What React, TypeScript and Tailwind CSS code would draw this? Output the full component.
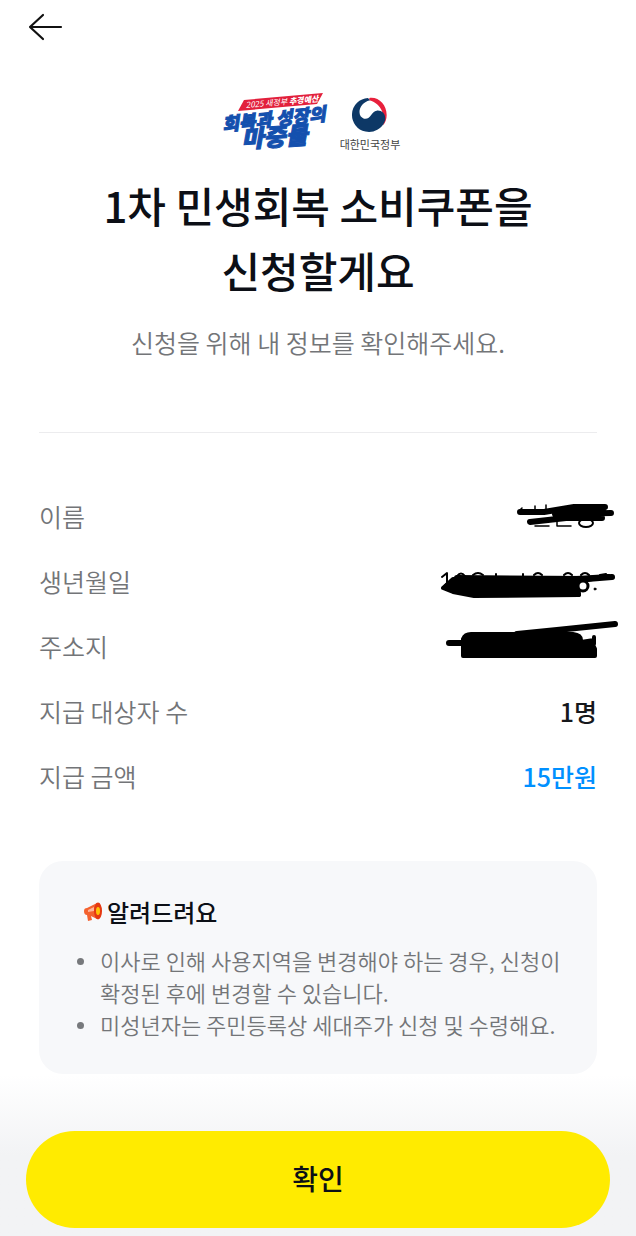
const rows = [
  { label: "이름", value: <NameMark /> },
  { label: "생년월일", value: <BirthMark /> },
  { label: "주소지", value: <AddressMark /> },
  { label: "지급 대상자 수", value: <span className="text-[#16181c]">1명</span> },
  { label: "지급 금액", value: <span className="text-[#0090ff]">15만원</span> },
];

const notices = [
  "이사로 인해 사용지역을 변경해야 하는 경우, 신청이 확정된 후에 변경할 수 있습니다.",
  "미성년자는 주민등록상 세대주가 신청 및 수령해요.",
];

function NameMark() {
  return (
    <svg className="-mr-5 h-9 w-[104px]" viewBox="0 0 104 36" fill="none" stroke="#000" strokeLinecap="round" strokeLinejoin="round">
      <path strokeWidth="6" d="M7 13h24L61 8h31M52 15l46-1M17 23l36-4h36" />
      <path strokeWidth="10" d="M44 15l24-3h20" />
      <path strokeWidth="1.500" d="M6 12l3-3M22 7v5M33 6v6M22 27h14M44 22v5h14" />
      <ellipse cx="73" cy="24" rx="7" ry="4" strokeWidth="2" />
    </svg>
  );
}

function BirthMark() {
  return (
    <svg className="-mr-5 h-9 w-[180px]" viewBox="0 0 180 36" fill="none" stroke="#000" strokeLinecap="round" strokeLinejoin="round">
      <path fill="#000" strokeWidth="4" d="M16 15l20-1h104l32-2-22 4-9 9 1 6-105 1-21-4-10-4z" />
      <path strokeWidth="6" d="M20 14l130 1 25-2M10 22l12 4 20 4h99" />
      <path strokeWidth="2" d="M5 13l5-4v17M20 12q4-5 8 0M36 11q5-4 10 0M59 10v3M86 10v3M97 11q4-4 8 0M127 11q4-4 8 0M144 11q4-4 8 0M163 11l6-1" />
      <ellipse cx="146" cy="22" rx="5" ry="5" strokeWidth="3" fill="#fff" />
      <circle cx="158" cy="25" r="1" fill="#000" strokeWidth="1" />
    </svg>
  );
}

function AddressMark() {
  return (
    <svg className="-mr-6 h-11 w-[176px] overflow-visible" viewBox="0 0 176 44" fill="none" stroke="#000" strokeLinecap="round" strokeLinejoin="round">
      <path fill="#000" strokeWidth="4" d="M18 14q2-5 8-5h102q8 1 8 6v16H18z" />
      <path strokeWidth="6" d="M4 18h14M72 9l40-4 58-6" />
      <path fill="#000" strokeWidth="4" d="M136 17l13-2v-3 7M134 20h14l2 4v7h-16z" />
    </svg>
  );
}

function CampaignLogo() {
  return (
    <svg className="h-16 w-[110px]" viewBox="0 0 110 64" role="img" aria-label="회복과 성장의 마중물">
      <path fill="#e2203c" d="M24 10l79-7-6 11-79 7z" />
      <g fontFamily="'Noto Sans CJK KR', sans-serif" fontStyle="italic" fontWeight="900">
        <text x="26" y="18" fontSize="8" fill="#fff" transform="rotate(-5 26 18)">
          <tspan fontWeight="400">2025 새정부 </tspan>추경예산
        </text>
        <g fill="#1450ae">
          <text x="3" y="41" fontSize="18" stroke="#1450ae" strokeWidth="1" transform="rotate(-6 3 41)">회복과 성장의</text>
          <text x="22" y="58" fontSize="24" stroke="#1450ae" strokeWidth="1" transform="rotate(-4 22 58)">마중물</text>
        </g>
      </g>
    </svg>
  );
}

function GovernmentLogo() {
  return (
    <div className="flex flex-col items-center pt-1">
      <svg className="size-10" viewBox="0 0 120 120">
        <path fill="#e8203c" d="M58 12C86 8 110 32 110 63C110 76 106 86 99 94C105 68 98 30 58 19z" />
        <path fill="#0d3866" d="M54 12A51 51 0 1 0 105 80C109 60 96 48 80 50C64 52 62 78 42 74C20 68 24 28 60 19z" />
      </svg>
      <span className="text-[11px] leading-5 text-[#444]">대한민국정부</span>
    </div>
  );
}

function Megaphone() {
  return (
    <svg className="h-5 w-5" viewBox="0 0 20 20">
      <path fill="#f4622f" d="M1 9q0-3 3-3l10-5v16l-6-3 1 4-4 1-1-6q-3 0-3-4z" />
      <path fill="#ffb59a" d="M5 8l6-3v4l-6 1z" />
      <ellipse cx="15" cy="9" rx="4" ry="8.500" fill="#e53912" />
      <ellipse cx="15" cy="9" rx="2" ry="4" fill="#ffc107" />
    </svg>
  );
}

export default function App() {
  return (
    <div className="flex min-h-screen flex-col bg-white font-['Noto_Sans_CJK_KR',sans-serif] break-keep">
      <header className="flex h-[54px] items-center px-7">
        <button type="button" aria-label="뒤로">
          <svg className="h-8 w-9" viewBox="0 0 36 32" fill="none" stroke="#111" strokeWidth="2.200" strokeLinecap="round" strokeLinejoin="round">
            <path d="M15 4L2 16l13 12M2 16h31" />
          </svg>
        </button>
      </header>

      <main className="px-[39px]">
        <section className="pt-9 text-center">
          <div className="flex justify-center gap-2.5 pr-4">
            <CampaignLogo />
            <GovernmentLogo />
          </div>
          <h1 className="mt-[18px] text-[42px] leading-[65px] font-medium text-[#0c0f16]">
            1차 민생회복 소비쿠폰을
            <br />
            신청할게요
          </h1>
          <p className="mt-[22px] text-[25px] leading-9 font-[350] text-[#737578]">신청을 위해 내 정보를 확인해주세요.</p>
        </section>

        <hr className="mt-[72px] border-[#ececee]" />

        <dl className="mt-[51px]">
          {rows.map((row) => (
            <div key={row.label} className="flex h-[65px] items-center justify-between">
              <dt className="text-[25px] font-[350] text-[#737578]">{row.label}</dt>
              <dd className="text-[25px] font-medium">{row.value}</dd>
            </div>
          ))}
        </dl>

        <section className="mt-[52px] rounded-3xl bg-[#f7f8fa] pt-[31px] pr-5 pb-[34px] pl-8">
          <h2 className="flex items-center gap-1 px-3 text-2xl leading-10 font-medium text-[#0c0f16]">
            <Megaphone />
            알려드려요
          </h2>
          <ul className="mt-3 px-1.5 text-[22px] leading-8 font-[350] text-[#737578]">
            {notices.map((notice) => (
              <li key={notice} className="flex gap-4">
                <span className="mt-3.5 size-[7px] shrink-0 rounded-full bg-[#77797c]" />
                {notice}
              </li>
            ))}
          </ul>
        </section>
      </main>

      <footer className="mt-auto bg-linear-to-b from-white to-[#f2f3f5] to-50% px-[26px] pt-14 pb-2">
        <button type="button" className="h-[97px] w-full rounded-full bg-[#ffeb00] pb-1 text-[28px] font-medium text-[#0c0f16]">
          확인
        </button>
      </footer>
    </div>
  );
}
